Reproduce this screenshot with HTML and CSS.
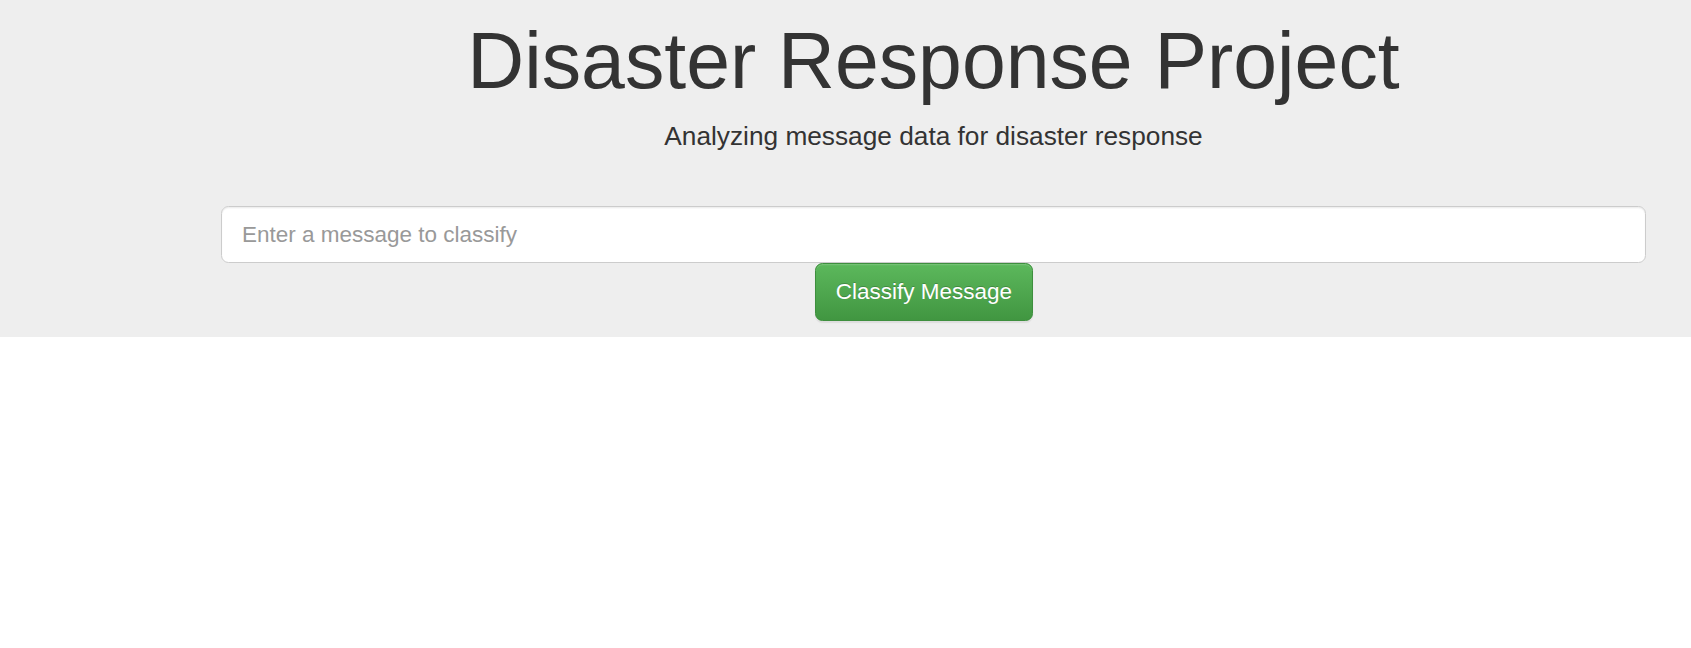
FILE: index.html
```html
<!DOCTYPE html>
<html lang="en">
<head>
<meta charset="utf-8">
<title>Disaster Response Project</title>
<link rel="stylesheet" href="styles.css">
</head>
<body>
<div class="jumbotron">
  <div class="container">
    <h1 class="title">Disaster Response Project</h1>
    <p class="lead">Analyzing message data for disaster response</p>
    <hr class="divider">
    <form class="query-form" action="#" method="get">
      <input type="text" class="query-input" name="query" placeholder="Enter a message to classify">
      <div class="btn-row">
        <button type="button" class="btn-classify">Classify Message</button>
      </div>
    </form>
  </div>
</div>
</body>
</html>
```

FILE: styles.css
```css
html, body {
  margin: 0;
  padding: 0;
  background: #fff;
}
body {
  font-family: "Liberation Sans", Arial, Helvetica, sans-serif;
  color: #333;
}
.jumbotron {
  background: #eee;
  padding: 18.4px 0 16px;
}
.container {
  width: 1425px;
  margin: 0 45px 0 auto;
}
.title {
  margin: 0 0 12.5px;
  font-size: 78.75px;
  line-height: 1.1;
  font-weight: 500;
  text-align: center;
  color: #333;
}
.lead {
  margin: 0;
  font-size: 26.25px;
  line-height: 37.5px;
  text-align: center;
}
.divider {
  margin: 25px 0;
  border: 0;
  border-top: 1.25px solid #eee;
  height: 0;
}
.query-form {
  margin: 0;
}
.query-input {
  display: block;
  box-sizing: border-box;
  width: 100%;
  height: 57px;
  margin: 0;
  padding: 12.5px 20px;
  font-family: inherit;
  font-size: 22.5px;
  line-height: 1.3333;
  color: #555;
  background: #fff;
  border: 1.25px solid #ccc;
  border-radius: 7.5px;
  box-shadow: inset 0 1.25px 1.25px rgba(0,0,0,.075);
  outline: none;
}
.query-input::placeholder {
  color: #999;
  opacity: 1;
}
.btn-row {
  margin-left: 41.6667%;
  display: flex;
}
.btn-classify {
  box-sizing: border-box;
  height: 57.5px;
  padding: 12.5px 20px;
  font-family: inherit;
  font-size: 22.5px;
  line-height: 1.3333;
  color: #fff;
  background-color: #5cb85c;
  background-image: linear-gradient(to bottom, #5cb85c 0, #419641 100%);
  border: 1.25px solid #3e8f3e;
  border-radius: 7.5px;
  box-shadow: inset 0 1.25px 0 rgba(255,255,255,.15), 0 1.25px 1.25px rgba(0,0,0,.075);
  text-shadow: 0 -1.25px 0 rgba(0,0,0,.2);
  cursor: pointer;
}
```
